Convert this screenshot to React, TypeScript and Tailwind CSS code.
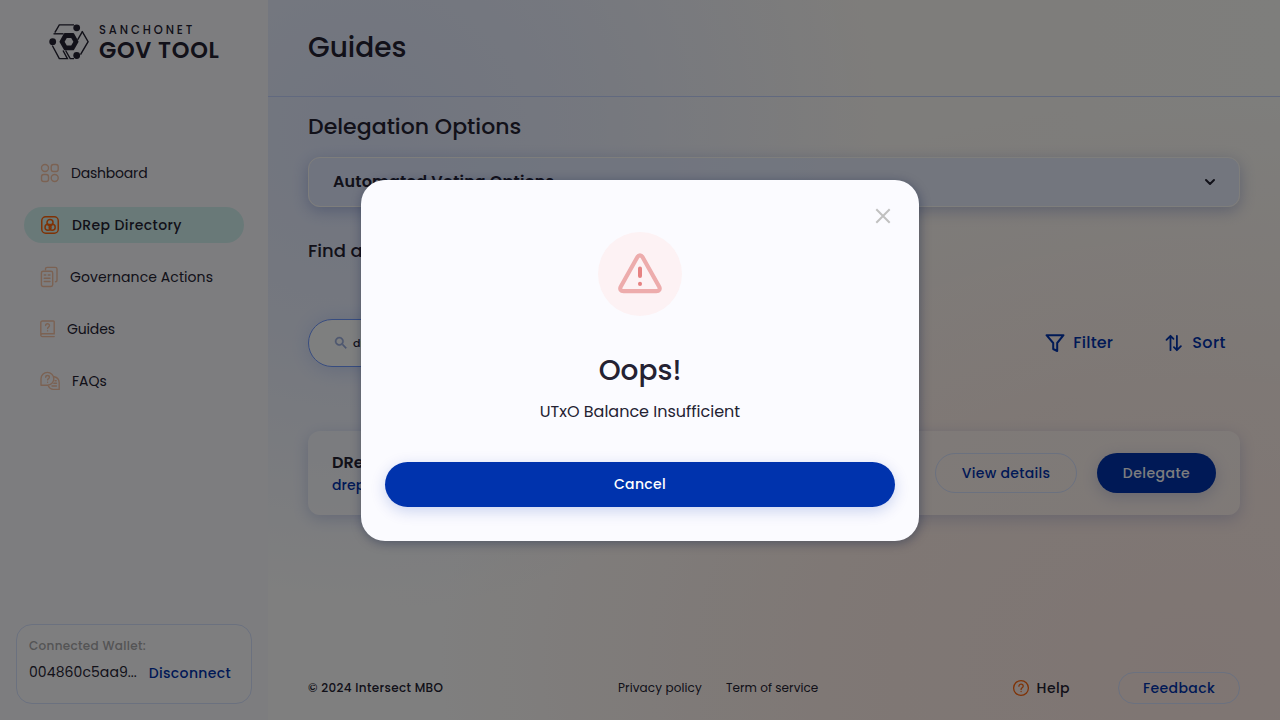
import type { ReactNode } from 'react';

function Logo() {
  return (
    <div className="flex h-[36px] items-start">
      <svg width="42" height="36" viewBox="0 0 42 36" fill="none" stroke="#242232" strokeWidth="1.4">
        <path d="M26 0.900H11.300L6.800 8.600" />
        <path d="M5.500 9.800H15.500" />
        <path d="M34 7.200 40.100 17.700 32.500 30.600" />
        <path d="M34.200 7.800 29.600 15.800" />
        <path d="M4.300 21.500 11.300 34.600H19.400L15 26.500" />
        <path d="M17.600 26.500 22.200 34.600H26" />
        <circle cx="28.700" cy="3.800" r="3.400" fill="#242232" stroke="none" />
        <circle cx="4.700" cy="17.700" r="3.400" fill="#242232" stroke="none" />
        <circle cx="28.700" cy="31.500" r="3.400" fill="#242232" stroke="none" />
        <path d="M16.800 10.100h8.400l4.300 7.600-4.300 7.600h-8.400l-4.300-7.600z" fill="#242232" strokeWidth="2" strokeLinejoin="round" />
        <path d="M18.800 13.900h4.400l2.200 3.800-2.200 3.800h-4.400l-2.200-3.800z" fill="#fbfbff" stroke="none" />
      </svg>
      <div className="ml-[9px] flex flex-col whitespace-nowrap text-[#242232]">
        <span className="text-[11.5px] leading-[12px] font-medium tracking-[2.9px]">SANCHONET</span>
        <span className="mt-[4px] h-[20px] text-[22.500px] leading-[20px] font-semibold tracking-[0.700px]">GOV TOOL</span>
      </div>
    </div>
  );
}

const peach = '#f6c4a6';

const DashboardIcon = (
  <svg width="19" height="20" viewBox="0 0 19 20" fill="none" stroke={peach} strokeWidth="1.400">
    <circle cx="5" cy="5" r="3.500" />
    <rect x="11.200" y="1.500" width="7" height="7" rx="2.200" />
    <rect x="1.500" y="11.500" width="7" height="7" rx="2.200" />
    <circle cx="14.700" cy="15" r="3.500" />
  </svg>
);
const DRepIcon = (
  <svg width="20" height="20" viewBox="0 0 20 20" fill="none" stroke="#ff640a" strokeWidth="1.500">
    <rect x="1.750" y="1.750" width="16.500" height="16.500" rx="4" />
    <circle cx="10" cy="7.500" r="3" />
    <circle cx="8" cy="12.200" r="3" />
    <circle cx="12.200" cy="12.200" r="3" />
  </svg>
);
const GovernanceIcon = (
  <svg width="18" height="22" viewBox="0 0 18 22" fill="none" stroke={peach} strokeWidth="1.400" strokeLinecap="round">
    <path d="M5.500 3.800V3A1.600 1.600 0 0 1 7.100 1.400h8.200A1.700 1.700 0 0 1 17 3.100v11.200a1.500 1.500 0 0 1-1.500 1.500" />
    <rect x="1.400" y="5.200" width="11.300" height="15.300" rx="1.700" />
    <path d="M4.200 9h1.600M8.200 9h1.800M4.200 12.300h5.800M4.200 15.500h5.800" />
  </svg>
);
const GuidesIcon = (
  <svg width="15" height="18" viewBox="0 0 15 18" fill="none" stroke={peach} strokeWidth="1.400" strokeLinecap="round">
    <path d="M14.200 16.600H2.300A1.500 1.500 0 0 1 .8 15V2.600A1.600 1.600 0 0 1 2.400 1h11a.8.8 0 0 1 .8.800v12H2.300A1.500 1.500 0 0 0 .8 15" />
    <path d="M5.600 5.600c0-2.400 3.900-2.400 3.900 0 0 1.500-1.900 1.500-1.900 3M7.600 10.800v.1" />
  </svg>
);
const FaqIcon = (
  <svg width="20" height="20" viewBox="0 0 20 20" fill="none" stroke={peach} strokeWidth="1.400" strokeLinecap="round" strokeLinejoin="round">
    <path d="M1 13.600 1 7.800A6.400 6.400 0 1 1 7.500 14.200H1z" />
    <path d="M14.200 5.800a6.300 6.300 0 0 1 5 6v6.600h-6a6 6 0 0 1-4.700-3.200" />
    <path d="M5.700 6.200c0-2.300 3.700-2.300 3.700 0 0 1.400-1.800 1.400-1.800 2.700M7.600 11.200v.1M15 9.700h1.200M13.800 12.300h2.700M12 15h4.500" />
  </svg>
);

const navItems: { label: string; icon: ReactNode; text: string }[] = [
  { label: 'Dashboard', icon: DashboardIcon, text: 'tracking-[-0.2px]' },
  { label: 'DRep Directory', icon: DRepIcon, text: 'bg-[#d3f2f1] font-medium tracking-[0.4px]' },
  { label: 'Governance Actions', icon: GovernanceIcon, text: 'tracking-[0.08px]' },
  { label: 'Guides', icon: GuidesIcon, text: 'tracking-[-0.15px]' },
  { label: 'FAQs', icon: FaqIcon, text: 'tracking-normal' },
];

function Sidebar() {
  return (
    <aside className="flex h-full w-[268px] shrink-0 flex-col bg-[#fbfbff]">
      <div className="pt-[24px] pl-[48px]">
        <Logo />
      </div>
      <nav className="mt-[95px] flex flex-col gap-4 px-6">
        {navItems.map((item) => (
          <a
            key={item.label}
            className={`flex h-[36px] items-center gap-3 rounded-full pl-4 text-[14px] text-[#242232] ${item.text}`}
          >
            {item.icon}
            {item.label}
          </a>
        ))}
      </nav>
      <div className="mx-4 mt-auto mb-4 h-[80px] rounded-2xl border border-[#d6e2ff] bg-white/50 px-3 pt-[12px]">
        <p className="text-[12px] leading-[18px] font-medium tracking-[0.320px] text-[#a8a8aa]">Connected Wallet:</p>
        <div className="mt-[5px] flex items-center justify-between pr-[8px] text-[14px] leading-[24px]">
          <span className="pb-[2px] tracking-[0.080px] text-[#242232]">004860c5aa9...</span>
          <span className="font-medium tracking-[0.340px] text-[#0033ad]">Disconnect</span>
        </div>
      </div>
    </aside>
  );
}

function Toolbar() {
  return (
    <div className="mt-[55px] flex h-[48px] items-center">
      <div className="flex h-full w-[500px] items-center rounded-full border border-[#6f99ff] bg-white/90 pl-[24px] text-[11px] font-medium text-[#242232] shadow-[2px_2px_20px_0px_rgba(47,98,220,0.2)]">
        <svg width="16" height="16" viewBox="0 0 24 24" fill="#99adde" stroke="#99adde" strokeWidth="0.6" className="mr-[4px]">
          <path d="M15.500 14h-.79l-.28-.27C15.410 12.590 16 11.110 16 9.500 16 5.910 13.090 3 9.500 3S3 5.910 3 9.500 5.910 16 9.500 16c1.610 0 3.090-.59 4.230-1.570l.27.28v.79l5 4.990L20.490 19zm-6 0C7.010 14 5 11.990 5 9.500S7.010 5 9.500 5 14 7.010 14 9.500 11.990 14 9.500 14" />
        </svg>
        drep
      </div>
      <div className="ml-auto flex items-center pr-[14px] text-[16px] font-medium tracking-[0.200px] text-[#0033ad]">
        <svg width="20" height="20" viewBox="0 0 20 20" fill="none" stroke="#0033ad" strokeWidth="2" strokeLinejoin="round" className="mr-[8px]">
          <path d="M1.500 2.200h17L12.200 10v8l-4-2v-6z" />
        </svg>
        <span>Filter</span>
        <svg width="18" height="18" viewBox="0 0 18 18" fill="none" stroke="#0033ad" strokeWidth="1.800" strokeLinecap="round" strokeLinejoin="round" className="mr-[9px] ml-[52px]">
          <path d="M5.500 16.200V1.800L1.500 5.800M5.500 1.800 8.500 4.800M11.900 1.800v14.400l4-4M11.900 16.200l-3-3" />
        </svg>
        <span className="tracking-[0.450px]">Sort</span>
      </div>
    </div>
  );
}

function DRepCard() {
  return (
    <div className="mt-[64px] flex h-[84px] items-center justify-between rounded-xl bg-white/30 px-6 shadow-[0px_4px_15px_0px_rgba(47,76,170,0.22)]">
      <div className="pt-[2px]">
        <p className="text-[16px] leading-[22px] font-semibold text-[#242232]">DRep</p>
        <p className="text-[14px] leading-[22px] font-medium tracking-[0.100px] text-[#0033ad]">drep1</p>
      </div>
      <div className="flex gap-5 text-[14px] font-medium">
        <button className="h-[40px] w-[142px] rounded-full border border-[#d6e2ff] tracking-[0.300px] text-[#0033ad]">View details</button>
        <button className="h-[40px] w-[119px] rounded-full bg-[#0033ad] tracking-[0.460px] text-[#fbfbff] shadow-[0px_4px_15px_0px_rgba(47,76,170,0.22)]">Delegate</button>
      </div>
    </div>
  );
}

function Footer() {
  return (
    <footer className="mt-auto mb-4 grid h-[32px] grid-cols-[310px_1fr_auto] items-center text-[12px] text-[#242232]">
      <span className="font-medium tracking-[0.330px]">© 2024 Intersect MBO</span>
      <div className="flex gap-6">
        <span className="tracking-[0.120px]">Privacy policy</span>
        <span className="tracking-[0.070px]">Term of service</span>
      </div>
      <div className="flex items-center text-[14px] font-medium">
        <svg width="18" height="18" viewBox="0 0 18 18" fill="none" stroke="#ff640a" strokeWidth="1.300" strokeLinecap="round" className="mr-[7px]">
          <circle cx="9" cy="9" r="7.400" />
          <path d="M6.900 7.200c0-2.700 4.300-2.700 4.300 0 0 1.600-2.100 1.600-2.100 3.200M9.100 12.400v.2" />
        </svg>
        <span className="tracking-[0.420px]">Help</span>
        <button className="ml-[48px] h-[32px] w-[122px] rounded-full border border-[#d6e2ff] tracking-[0.380px] text-[#0033ad]">Feedback</button>
      </div>
    </footer>
  );
}

function Modal() {
  return (
    <div className="absolute inset-0 flex flex-col items-center bg-black/50 pt-[180px]">
      <div className="relative flex h-[361px] w-[558px] flex-col items-center rounded-3xl bg-[#fbfbff] px-6 pt-[52px] shadow-[1px_2px_11px_0px_rgba(0,18,61,0.37)]">
        <svg width="24" height="24" viewBox="0 0 24 24" stroke="#c0c0c0" strokeWidth="2" className="absolute top-[24px] right-[24px]">
          <path d="M5.300 5.300 18.700 18.700M18.700 5.300 5.300 18.700" />
        </svg>
        <div className="flex h-[84px] w-[84px] items-center justify-center rounded-full bg-[#fdf2f4]">
          <svg width="48" height="48" viewBox="0 0 48 48" fill="none" strokeLinecap="round" className="mt-[2px]">
            <path d="M21.300 6.700 4.700 36.300C3.200 39 4.600 41 7.500 41h33c2.900 0 4.300-2 2.800-4.700L26.700 6.700c-1.500-2.600-3.900-2.600-5.400 0z" stroke="#edacac" strokeWidth="4.200" transform="translate(0.200 -0.400) scale(0.990)" />
            <path d="M24 17.500v7.500M24 32.800v.1" stroke="#e68282" strokeWidth="4" />
          </svg>
        </div>
        <h2 className="mt-[34px] text-[28px] leading-[42px] font-medium text-[#242232]">Oops!</h2>
        <p className="mt-[8px] text-[16px] leading-[24px] text-[#242232]">UTxO Balance Insufficient</p>
        <button className="mt-[38px] h-[45px] w-full rounded-full bg-[#0033ad] text-[14px] font-medium tracking-[0.350px] text-white shadow-[0px_4px_15px_0px_rgba(0,51,173,0.2)]">
          Cancel
        </button>
      </div>
    </div>
  );
}

export default function App() {
  return (
    <div className="relative flex h-[720px] w-[1280px] overflow-hidden bg-white bg-[radial-gradient(ellipse_520px_480px_at_360px_130px,rgba(222,231,255,0.9)_0%,rgba(222,231,255,0.6)_45%,rgba(222,231,255,0)_100%),radial-gradient(ellipse_760px_560px_at_1200px_660px,rgba(255,228,222,0.7)_0%,rgba(255,230,222,0.5)_50%,rgba(255,240,228,0)_100%),linear-gradient(90deg,#ffffff_30%,#fdfaf6_70%,#fcfcf8_100%)] font-['Poppins','Inter',sans-serif]">
      <Sidebar />
      <main className="flex h-full flex-1 flex-col">
        <header className="flex h-[97px] shrink-0 items-center border-b border-[#c3d2ff] px-10">
          <h1 className="text-[28px] leading-[42px] font-medium text-[#242232]">Guides</h1>
        </header>
        <div className="flex flex-1 flex-col px-10">
          <h2 className="mt-[13px] text-[22px] leading-[34px] font-medium tracking-[0.040px] text-[#242232]">Delegation Options</h2>
          <div className="mt-[13px] flex h-[50px] items-center justify-between rounded-xl border border-[#fdfcf8] bg-[#dfe8ff]/75 pr-[23px] pl-6 text-[16px] font-semibold tracking-[0.150px] text-[#242232] shadow-[0px_4px_15px_0px_rgba(47,76,170,0.3)]">
            Automated Voting Options
            <svg width="12" height="12" viewBox="0 0 12 12" fill="none" stroke="#242232" strokeWidth="2" strokeLinecap="round" strokeLinejoin="round">
              <path d="M2 4l4 4 4-4" />
            </svg>
          </div>
          <h3 className="mt-[30px] text-[18px] leading-[27px] font-medium text-[#242232]">Find a DRep</h3>
          <Toolbar />
          <DRepCard />
          <Footer />
        </div>
      </main>
      <Modal />
    </div>
  );
}
